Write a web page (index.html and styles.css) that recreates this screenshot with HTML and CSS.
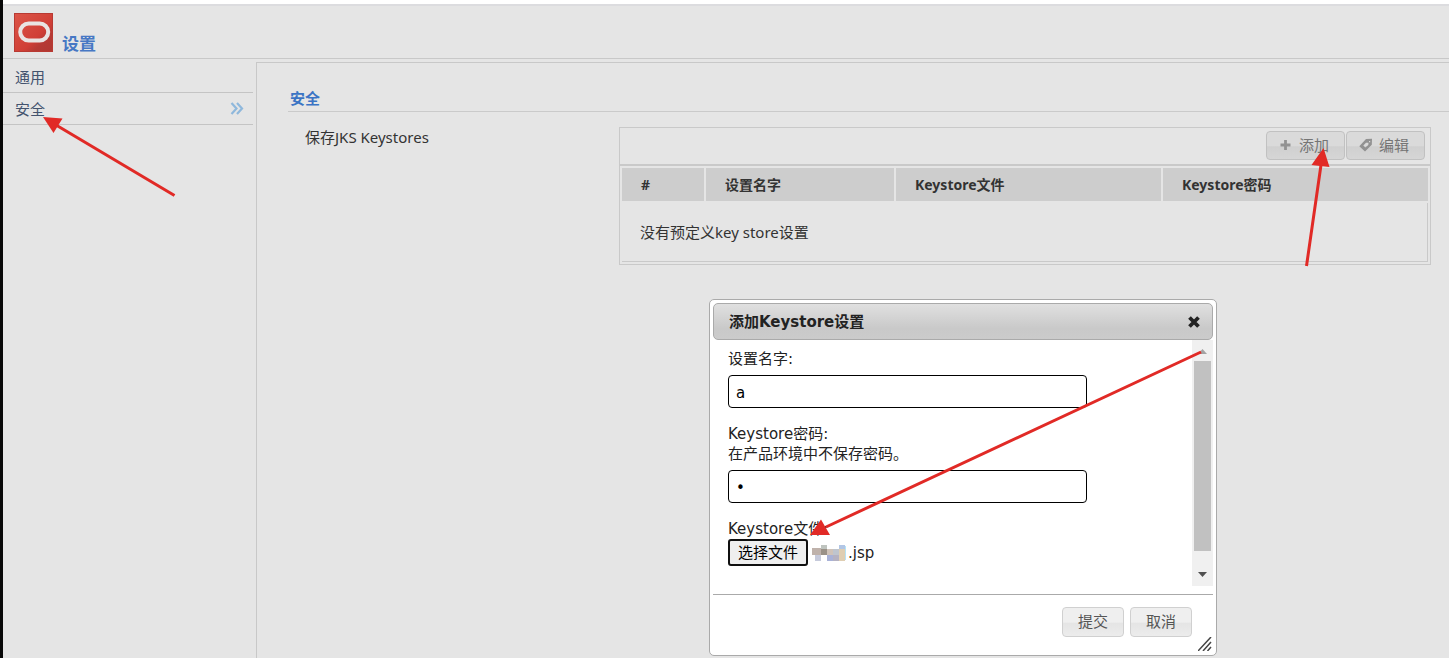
FILE: index.html
```html
<!DOCTYPE html>
<html lang="zh-CN">
<head>
<meta charset="utf-8">
<title>设置</title>
<link rel="stylesheet" href="styles.css">
</head>
<body>
<div class="page">
  <header class="header">
    <svg class="logo" viewBox="0 0 39 39" aria-hidden="true">
      <defs>
        <linearGradient id="red" x1="0" y1="0" x2="1" y2="1">
          <stop offset="0" stop-color="#dc5548"/>
          <stop offset=".6" stop-color="#d03f36"/>
          <stop offset=".75" stop-color="#b63a34"/>
          <stop offset="1" stop-color="#b03832"/>
        </linearGradient>
      </defs>
      <rect x=".5" y=".5" width="38" height="38" fill="url(#red)" stroke="#b83a33"/>
      <rect x="6.200" y="10.500" width="28" height="17" rx="8.500" fill="none" stroke="#e9e4e2" stroke-width="4"/>
    </svg>
    <h1 class="title">设置</h1>
  </header>
  <div class="columns">
    <nav class="sidebar">
      <a class="nav-item" href="#general">通用</a>
      <a class="nav-item" href="#security">安全
        <svg class="chevrons" viewBox="0 0 14 14" aria-hidden="true"><path d="M1.500 1 6.500 6.500l-5 5.500M7 1 12 6.500 7 12" fill="none" stroke="#8fb8dc" stroke-width="2.200"/></svg>
      </a>
    </nav>
    <main class="main">
      <h2 class="section-title">安全</h2>
      <div class="row">
        <div class="row-label">保存JKS Keystores</div>
        <div class="panel">
          <div class="toolbar">
            <button class="btn muted" type="button">
              <svg class="icon" viewBox="0 0 14 14" aria-hidden="true"><path d="M6.500 2v10M1.500 7h10" stroke="#929292" stroke-width="2.800"/></svg>添加
            </button>
            <button class="btn muted" type="button">
              <svg class="icon" viewBox="0 0 14 14" aria-hidden="true"><path fill="#929292" fill-rule="evenodd" d="M7 1 13 .8l-.2 6L6 13.500.3 8.200zM7 4.800 4.300 7.500l2 2L9.300 7l.2-2.200zM10 3v1.200h1.200V3z"/></svg>编辑
            </button>
          </div>
          <table class="stores">
            <colgroup><col class="c-num"><col class="c-name"><col><col></colgroup>
            <thead><tr><th>#</th><th>设置名字</th><th>Keystore文件</th><th>Keystore密码</th></tr></thead>
            <tbody><tr><td colspan="4">没有预定义key store设置</td></tr></tbody>
          </table>
        </div>
      </div>
    </main>
  </div>

  <section class="dialog" role="dialog" aria-labelledby="dialog-title">
    <div class="dialog-bar">
      <h2 class="dialog-title" id="dialog-title">添加Keystore设置</h2>
      <button class="close" type="button" aria-label="关闭">
        <svg viewBox="0 0 12 12" width="12" height="12" aria-hidden="true"><path d="M1.500 1.500 10.500 10.500M10.500 1.500 1.500 10.500" stroke="#222" stroke-width="3.800"/></svg>
      </button>
    </div>
    <div class="dialog-body">
      <form class="form">
        <div class="field">
          <label class="field-label" for="name">设置名字:</label>
          <input class="text" id="name" type="text" value="a">
        </div>
        <div class="field">
          <label class="field-label" for="password">Keystore密码:<br>在产品环境中不保存密码。</label>
          <input class="text" id="password" type="password" value="a">
        </div>
        <div class="field">
          <label class="field-label last" for="file">Keystore文件:</label>
          <div class="file-row">
            <button class="file-btn" id="file" type="button">选择文件</button>
            <svg class="mosaic" viewBox="0 0 35 16" aria-hidden="true">
              <path fill="#bfb2ab" d="M0 3h9v7H0z"/><path fill="#c6cadb" d="M3 10h6v6H3z"/>
              <path fill="#bfc4bf" d="M9 0h6v4H9z"/><path fill="#9a9187" d="M9 4h6v6H9z"/>
              <path fill="#d0c3b9" d="M15 4h6v6h-6z"/><path fill="#a9b2d7" d="M15 10h6v6h-6z"/>
              <path fill="#bfc5ce" d="M21 4h6v6h-6z"/><path fill="#b5b2c2" d="M21 10h6v6h-6z"/>
              <path fill="#b2c6e5" d="M27 0h6v4h-6z"/><path fill="#dfceb2" d="M27 4h6v12h-6z"/>
              <path fill="#b5e3f6" d="M33 1h1v14h-1z"/>
            </svg>
            <span>.jsp</span>
          </div>
        </div>
      </form>
      <div class="scrollbar" aria-hidden="true">
        <svg class="arrow" viewBox="0 0 21 21"><path fill="#a3a3a3" d="M6 14h9l-4.500-5z"/></svg>
        <div class="track"><div class="thumb"></div></div>
        <svg class="arrow" viewBox="0 0 21 21"><path fill="#505050" d="M6 7h9l-4.500 5z"/></svg>
      </div>
    </div>
    <footer class="dialog-footer">
      <button class="btn" type="button">提交</button>
      <button class="btn" type="button">取消</button>
    </footer>
    <svg class="grip" viewBox="0 0 14 14" aria-hidden="true"><path d="M0 14 13 0M5 14l8-9M9.500 14l3.500-4" stroke="#444" stroke-width="1.500"/></svg>
  </section>

  <svg class="marks" width="1449" height="658" viewBox="0 0 1449 658" aria-hidden="true">
    <g stroke="#e12a26" stroke-width="3"><path d="M174.500 195.500 56 125M1306.500 266 1321 165M1201 352 826 527"/></g>
    <g fill="#e12a26"><path d="M43 117l19.500 1.500-9 14.500zM1323.500 148l6 19-18-2zM810 535l11-15.500 9 15.500z"/></g>
  </svg>
</div>
</body>
</html>
```
FILE: styles.css
```css
* { box-sizing: border-box; }

body {
  margin: 0;
  font: 15px/20px "Noto Sans", "Noto Sans CJK SC", sans-serif;
  color: #333;
}

h1, h2 { margin: 0; }

button, input { font: inherit; }

.page {
  position: relative;
  display: flex;
  flex-direction: column;
  height: 100vh;
  overflow: hidden;
  border-left: 3px solid #080808;
  background: #e5e5e5;
}

.page::before {
  content: "";
  height: 4px;
  background: #fff;
}

.header {
  display: flex;
  align-items: flex-end;
  gap: 9px;
  padding: 7px 11px 6px;
  border-top: 2px solid #dcdcdf;
  border-bottom: 1px solid #c8c8c8;
}

.logo { width: 39px; height: 39px; }

.title {
  font-size: 17px;
  line-height: 16px;
  color: #4778c4;
}

.columns { display: flex; flex: 1; }

.sidebar { width: 250px; }

.nav-item {
  display: flex;
  align-items: center;
  justify-content: space-between;
  height: 32px;
  padding: 0 9px 0 12px;
  border-bottom: 1px solid #c4c4c4;
  color: #43536e;
  text-decoration: none;
}

.nav-item:first-child { height: 34px; padding-top: 2px; }

.chevrons { width: 14px; height: 14px; }

.main {
  flex: 1;
  margin: 3px 0 0 3px;
  padding: 25px 0 0 31px;
  border-left: 1px solid #c8c8c8;
  border-top: 1px solid #c8c8c8;
}

.section-title {
  font-size: 15px;
  line-height: 20px;
  padding: 0 0 3px 2px;
  border-bottom: 1px solid #cacaca;
  color: #3b74c4;
}

.row {
  display: flex;
  padding: 15px 18px 0 17px;
}

.row-label { width: 314px; flex: none; }

.panel { flex: 1; border: 1px solid #c9c9c9; }

.toolbar {
  display: flex;
  justify-content: flex-end;
  gap: 1px;
  padding: 3px 5px 4px;
  border-bottom: 2px solid #c9c9c9;
}

.btn {
  display: flex;
  align-items: center;
  justify-content: center;
  gap: 6px;
  height: 30px;
  padding: 0 15px;
  border: 1px solid #d0d0d0;
  border-radius: 4px;
  background: linear-gradient(#efefef 50%, #e5e5e5 55%, #ececec);
  color: #555;
}

.btn.muted {
  height: 29px;
  padding: 0 15px 1px 12px;
  border-color: #c1c1c1;
  background: linear-gradient(#dadada 50%, #d0d0d0 55%, #d6d6d6);
  color: #757575;
}

.icon { width: 14px; height: 14px; }

.stores {
  width: 100%;
  table-layout: fixed;
  border-spacing: 2px;
}

.c-num { width: 82px; }
.c-name { width: 188px; }

.stores th {
  height: 33px;
  padding: 0 19px;
  background: #cdcdcd;
  font-size: 14px;
  text-align: left;
}

.stores td {
  height: 59px;
  padding: 0 18px;
  border-right: 1px solid #c9c9c9;
  border-bottom: 1px solid #c9c9c9;
}

.dialog {
  position: absolute;
  left: 706px;
  top: 299px;
  width: 508px;
  padding: 3px;
  border: 1px solid #aaa;
  border-radius: 5px;
  background: #fff;
  color: #222;
  font-family: "DejaVu Sans", "Noto Sans CJK SC", sans-serif;
}

.dialog-bar {
  display: flex;
  align-items: center;
  justify-content: space-between;
  height: 37px;
  padding: 1px 12px 0 15px;
  border: 1px solid #aaa;
  border-radius: 5px;
  background: linear-gradient(#e0e0e0, #c9c9c9 70%, #cbcbcb);
}

.dialog-title { font-size: 15px; line-height: 20px; }

.close {
  display: flex;
  padding: 0;
  border: 0;
  background: none;
}

.dialog-body { display: flex; height: 246px; }

.form { flex: 1; padding: 9px 15px 0; }

.field { margin-bottom: 16px; }

.field-label { display: block; padding-bottom: 6px; }
.field-label.last { padding-bottom: 0; }

.text {
  display: block;
  width: 359px;
  height: 33px;
  padding: 2px 7px 0;
  border: 1px solid #000;
  border-radius: 4px;
  background: #fff;
  color: #000;
}

.file-row { display: flex; align-items: center; }

.file-btn {
  height: 27px;
  padding: 0 8px;
  border: 2px solid #101010;
  border-radius: 3px;
  background: #efefef;
  color: #000;
}

.mosaic { width: 35px; height: 16px; margin: 0 1px 0 4px; }

.scrollbar {
  display: flex;
  flex-direction: column;
  width: 21px;
  background: #f0f0f0;
}

.arrow { width: 21px; height: 21px; }

.track { flex: 1; padding: 0 2px; }

.thumb { height: 93%; background: #c1c1c1; }

.dialog-footer {
  display: flex;
  justify-content: flex-end;
  gap: 6px;
  margin-top: 8px;
  padding: 12px 21px 15px;
  border-top: 1px solid #aaa;
}

.grip {
  position: absolute;
  right: 4px;
  bottom: 4px;
  width: 14px;
  height: 14px;
}

.marks {
  position: absolute;
  left: -3px;
  top: 0;
  pointer-events: none;
}
```
